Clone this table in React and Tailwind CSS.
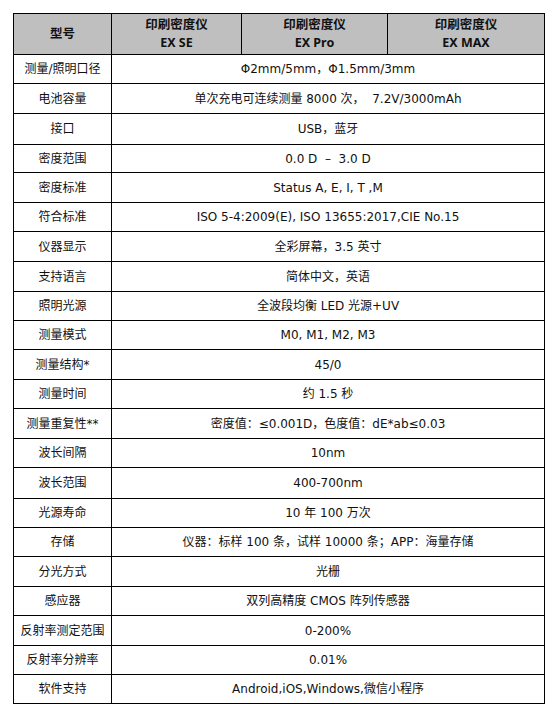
import React from "react";

const rows = [
  ["测量/照明口径", "Φ2mm/5mm，Φ1.5mm/3mm", "h-[29px]"],
  ["电池容量", "单次充电可连续测量 8000 次，  7.2V/3000mAh", "h-[30px]"],
  ["接口", "USB，蓝牙", "h-[31px]"],
  ["密度范围", "0.0 D  –  3.0 D", "h-[28px]"],
  ["密度标准", "Status A, E, I, T ,M", "h-[30px]"],
  ["符合标准", "ISO 5-4:2009(E), ISO 13655:2017,CIE No.15", "h-[29px]"],
  ["仪器显示", "全彩屏幕，3.5 英寸", "h-[30px]"],
  ["支持语言", "简体中文，英语", "h-[30px]"],
  ["照明光源", "全波段均衡 LED 光源+UV", "h-[29px]"],
  ["测量模式", "M0, M1, M2, M3", "h-[29px]"],
  ["测量结构*", "45/0", "h-[30px]"],
  ["测量时间", "约 1.5 秒", "h-[29px]"],
  ["测量重复性**", "密度值：≤0.001D，色度值：dE*ab≤0.03", "h-[30px]"],
  ["波长间隔", "10nm", "h-[29px]"],
  ["波长范围", "400-700nm", "h-[31px]"],
  ["光源寿命", "10 年 100 万次", "h-[29px]"],
  ["存储", "仪器：标样 100 条，试样 10000 条；APP：海量存储", "h-[29px]"],
  ["分光方式", "光栅", "h-[30px]"],
  ["感应器", "双列高精度 CMOS 阵列传感器", "h-[29px]"],
  ["反射率测定范围", "0-200%", "h-[30px]"],
  ["反射率分辨率", "0.01%", "h-[29px]"],
  ["软件支持", "Android,iOS,Windows,微信小程序", "h-[29px]"],
];

export default function App() {
  return (
    <div className="w-[558px] h-[712px] bg-white pt-[13px] pl-[13px] font-['DejaVu_Sans','Noto_Sans_CJK_SC',sans-serif] text-[12px] text-[#111]">
      <table className="border-collapse table-fixed w-[531px]">
        <colgroup>
          <col className="w-[98px]" />
          <col className="w-[130px]" />
          <col className="w-[146px]" />
          <col className="w-[157px]" />
        </colgroup>
        <thead>
          <tr className="h-[41px] bg-[#bfbfbf]">
            <th className="border border-black font-bold text-[12.5px] text-center align-middle p-0 leading-[18px]">型号</th>
            {["EX SE", "EX Pro", "EX MAX"].map((m) => (
              <th key={m} className="border border-black font-bold text-[12.5px] text-center align-middle p-0 leading-[18px] font-['Noto_Sans','Noto_Sans_CJK_SC',sans-serif]">
                <div>印刷密度仪</div>
                <div>{m}</div>
              </th>
            ))}
          </tr>
        </thead>
        <tbody>
          {rows.map(([label, value, h]) => (
            <tr key={label} className={h}>
              <td className="border border-black text-center align-middle p-0 leading-[16px] whitespace-nowrap">{label}</td>
              <td colSpan={3} className="border border-black text-center align-middle p-0 leading-[16px] whitespace-pre">{value}</td>
            </tr>
          ))}
        </tbody>
      </table>
    </div>
  );
}
